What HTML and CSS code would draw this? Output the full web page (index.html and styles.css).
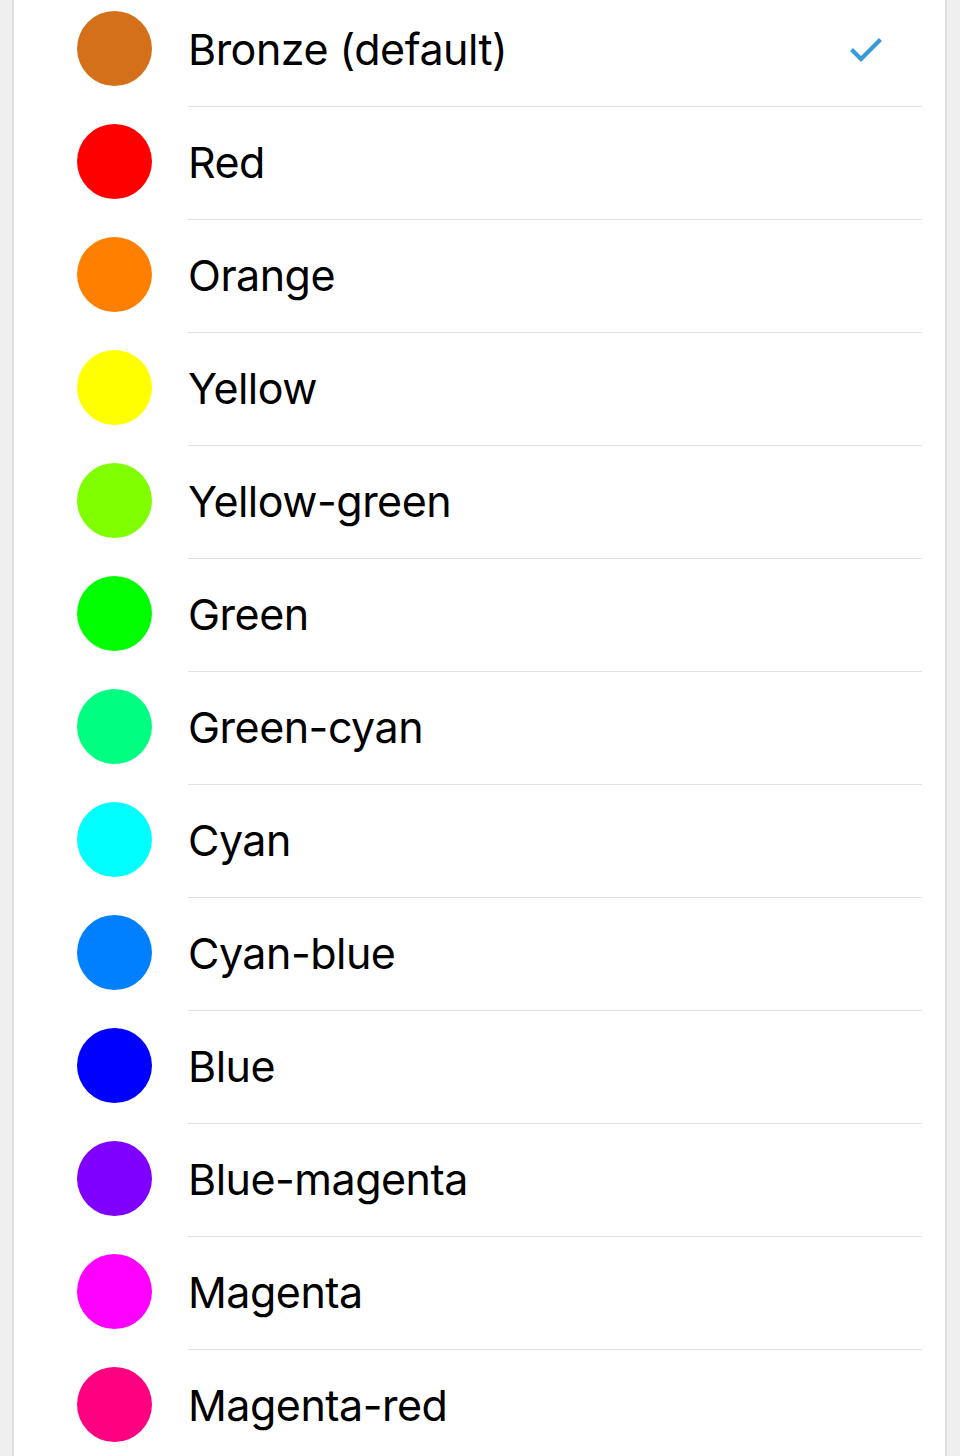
FILE: index.html
```html
<!DOCTYPE html>
<html lang="en">
<head>
<meta charset="utf-8">
<title>Colour</title>
<link rel="stylesheet" href="styles.css">
</head>
<body>
<div class="card">
  <ul class="list">
    <li class="row"><span class="swatch" style="background:#d4701a"></span><div class="content"><span class="label">Bronze (default)</span><svg class="check" width="32" height="28" viewBox="0 0 32 28"><path d="M3 13 L11 21 L29 3" fill="none" stroke="#3a9ad9" stroke-width="4.2" stroke-linecap="square" stroke-linejoin="miter"/></svg></div></li>
    <li class="row"><span class="swatch" style="background:#ff0000"></span><div class="content"><span class="label">Red</span></div></li>
    <li class="row"><span class="swatch" style="background:#ff8000"></span><div class="content"><span class="label">Orange</span></div></li>
    <li class="row"><span class="swatch" style="background:#ffff00"></span><div class="content"><span class="label">Yellow</span></div></li>
    <li class="row"><span class="swatch" style="background:#80ff00"></span><div class="content"><span class="label">Yellow-green</span></div></li>
    <li class="row"><span class="swatch" style="background:#00ff00"></span><div class="content"><span class="label">Green</span></div></li>
    <li class="row"><span class="swatch" style="background:#00ff80"></span><div class="content"><span class="label">Green-cyan</span></div></li>
    <li class="row"><span class="swatch" style="background:#00ffff"></span><div class="content"><span class="label">Cyan</span></div></li>
    <li class="row"><span class="swatch" style="background:#0080ff"></span><div class="content"><span class="label">Cyan-blue</span></div></li>
    <li class="row"><span class="swatch" style="background:#0000ff"></span><div class="content"><span class="label">Blue</span></div></li>
    <li class="row"><span class="swatch" style="background:#8000ff"></span><div class="content"><span class="label">Blue-magenta</span></div></li>
    <li class="row"><span class="swatch" style="background:#ff00ff"></span><div class="content"><span class="label">Magenta</span></div></li>
    <li class="row"><span class="swatch" style="background:#ff0080"></span><div class="content"><span class="label">Magenta-red</span></div></li>
  </ul>
</div>
</body>
</html>
```
FILE: styles.css
```css
html, body {
  margin: 0;
  padding: 0;
  background: #efeff0;
  height: 100%;
  overflow: hidden;
}
body {
  font-family: Inter, "Noto Sans", sans-serif;
  color: #000;
}
.card {
  margin: 0 13px 0 12px;
  background: #fff;
  border-left: 2px solid #dedede;
  border-right: 2px solid #dedede;
  min-height: 100%;
}
.list {
  list-style: none;
  margin: -6px 0 0 0;
  padding: 0;
}
.row {
  display: flex;
  align-items: center;
  height: 113px;
}
.swatch {
  flex: none;
  width: 75px;
  height: 75px;
  border-radius: 50%;
  margin: 0 36px 5px 63px;
}
.content {
  flex: 1;
  align-self: stretch;
  display: flex;
  align-items: center;
  justify-content: space-between;
  border-bottom: 1px solid #e2e2e2;
  margin-right: 23px;
  padding-bottom: 2px;
}
.label {
  font-size: 43px;
  line-height: 1;
  letter-spacing: -0.5px;
}
.check {
  margin: 6px 40px 0 0;
  display: block;
}
```
